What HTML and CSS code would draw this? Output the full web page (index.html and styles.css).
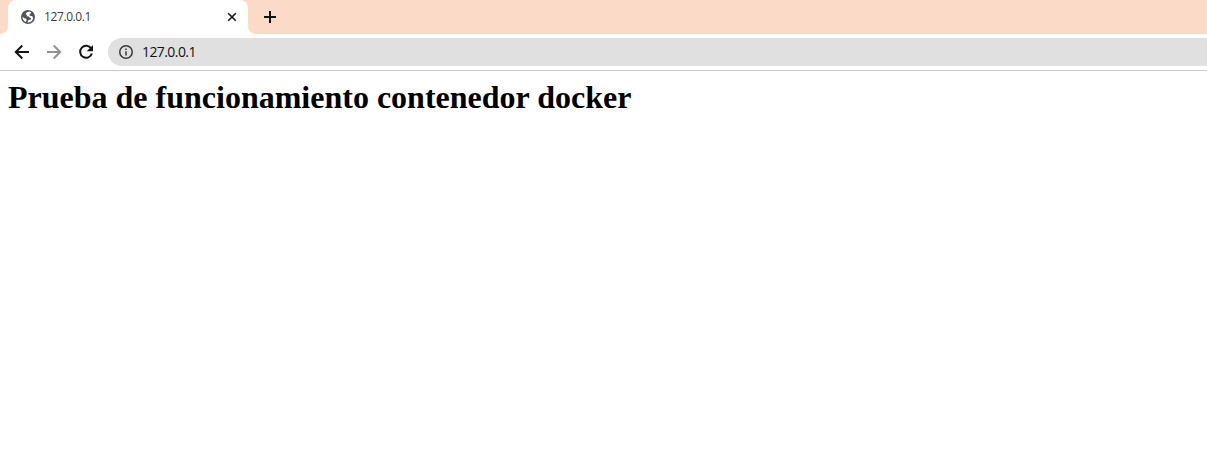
FILE: index.html
```html
<!DOCTYPE html>
<html lang="es">
<head>
<meta charset="utf-8">
<title>127.0.0.1</title>
<link rel="stylesheet" href="styles.css">
</head>
<body>
<header class="tab-strip">
  <div class="tab">
    <svg class="favicon" viewBox="0 0 14 14"><circle cx="7" cy="7" r="7" fill="#505359"/><path d="M8.200 1.600C6.200 2 5 2.800 4.600 4.300L6 5.100 5.600 6.200 8 6.400 8.600 7.700 10.200 8 9.800 9.600 7.600 10 6.300 12.300C9.300 12.800 11.800 10.800 12.300 8L11.300 6.300 9 5.800 8.300 4.700 9.400 3.700 10.400 2.600ZM1.500 6.700C1.500 9 2.600 10.900 4.600 11.900L5.700 10.300 5.200 8.700 3.400 8.200Z" fill="#fff"/></svg>
    <span class="tab-title">127.0.0.1</span>
    <svg class="close" viewBox="0 0 10 10"><path d="M1.200 1.200 8.800 8.800M8.800 1.200 1.200 8.800"/></svg>
  </div>
  <div class="tab-edge"></div>
  <svg class="new-tab" viewBox="0 0 12 12"><path d="M6 0V12M0 6H12"/></svg>
</header>
<nav class="toolbar">
  <svg class="tool" viewBox="0 0 16 16"><path d="M15 8H2M8.300 1.500 1.800 8 8.300 14.500"/></svg>
  <svg class="tool disabled" viewBox="0 0 16 16"><path d="M1 8H14M7.700 1.500 14.200 8 7.700 14.500"/></svg>
  <svg class="tool" viewBox="0 0 16 16"><path d="M13.200 4.500A6 6 0 1 0 13.900 9.500"/><path class="solid" d="M15 1V7.300H8.700Z"/></svg>
  <div class="address">
    <svg class="info" viewBox="0 0 14 14"><circle cx="7" cy="7" r="6.250"/><path d="M7 6.200V10.500M7 3.500V5"/></svg>
    <span class="url">127.0.0.1</span>
  </div>
</nav>
<main class="page"><h1 class="heading">Prueba de funcionamiento contenedor docker</h1></main>
</body>
</html>
```
FILE: styles.css
```css
* { box-sizing: border-box; }
body { margin: 0; background: #fff; overflow: hidden; }
svg { display: block; flex: none; }
.tab-strip {
  display: flex;
  height: 34px;
  padding-left: 8px;
  background: linear-gradient(#fff, #fff) no-repeat 0 100% / 256px 8px, #fcdac8;
}
.tab-strip::before {
  content: "";
  width: 8px;
  height: 34px;
  margin-left: -8px;
  background: #fcdac8;
  border-bottom-right-radius: 8px;
}
.tab {
  display: flex;
  align-items: center;
  width: 240px;
  padding: 0 11px 0 13px;
  background: #fff;
  border-radius: 8px 8px 0 0;
}
.tab-edge {
  width: 8px;
  background: #fcdac8;
  border-bottom-left-radius: 8px;
}
.favicon { width: 14px; height: 14px; }
.tab-title {
  flex: 1;
  margin-left: 9px;
  font: 12px/16px "Open Sans", sans-serif;
  letter-spacing: -0.4px;
  color: #3c4043;
}
.close { width: 10px; height: 10px; fill: none; stroke: #17181c; stroke-width: 1.6; }
.new-tab {
  width: 12px;
  height: 12px;
  margin: 11px 0 0 8px;
  fill: none;
  stroke: #111216;
  stroke-width: 2;
}
.toolbar {
  display: flex;
  align-items: center;
  gap: 16px;
  height: 37px;
  padding-left: 14px;
  border-bottom: 1px solid #c9c9c9;
}
.tool { width: 16px; height: 16px; fill: none; stroke: #141519; stroke-width: 2; }
.tool .solid { fill: #141519; stroke: none; }
.disabled { stroke: #929292; }
.address {
  display: flex;
  flex: 1;
  align-items: center;
  height: 28px;
  margin-left: -2px;
  padding-left: 11px;
  background: #e0e0e0;
  border-radius: 14px 0 0 14px;
}
.info { width: 14px; height: 14px; fill: none; stroke: #34373c; stroke-width: 1.5; }
.url {
  margin-left: 9px;
  font: 14px/18px "Open Sans", sans-serif;
  letter-spacing: -0.58px;
  color: #111216;
}
.page { padding: 8px; }
.heading { margin: 0; font: bold 32px/37px "Liberation Serif", serif; color: #000; }
```
